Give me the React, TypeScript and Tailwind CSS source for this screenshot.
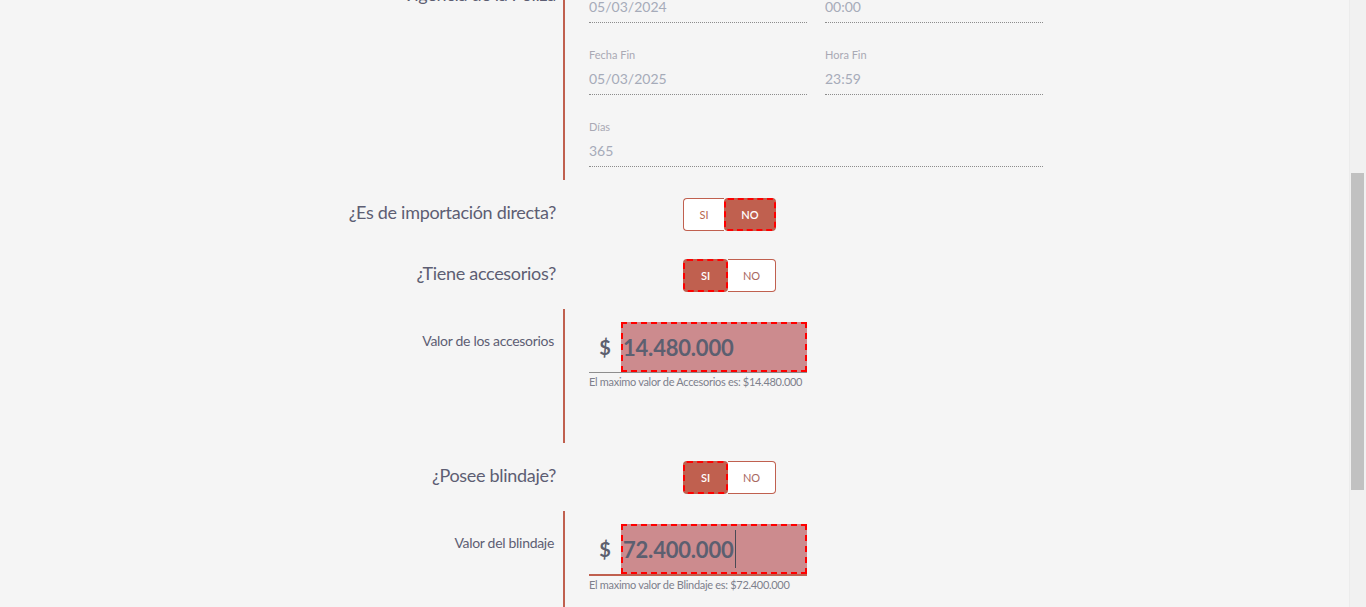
import React, { useLayoutEffect, useRef } from "react";

const ACCENT = "#c0604f";

function Field({ label, value, span }: { label: string; value: string; span?: boolean }) {
  return (
    <div className={span ? "col-span-2" : ""}>
      <div className="text-[11px] leading-[16px] text-[#a9a9b4]">{label}</div>
      <div className="h-[32px] flex items-center text-[14px] text-[#a6abb9] border-b border-dotted border-[#8c8c8c]">
        {value}
      </div>
    </div>
  );
}

function Toggle({ value }: { value: "SI" | "NO" }) {
  const siSel = value === "SI";
  return (
    <div className="flex h-[33px] w-[93px] text-[11px] leading-none">
      <div
        className={
          siSel
            ? "w-[45px] flex items-center justify-center bg-[#c0604f] text-white font-semibold border-2 border-dashed border-[#ff0000] rounded-[4px]"
            : "w-[41px] flex items-center justify-center bg-white text-[#b8664f] border border-r-0 border-[#c0604f] rounded-l-[4px]"
        }
      >
        SI
      </div>
      <div
        className={
          !siSel
            ? "w-[52px] flex items-center justify-center bg-[#c0604f] text-white font-semibold border-2 border-dashed border-[#ff0000] rounded-[4px]"
            : "w-[48px] flex items-center justify-center bg-white text-[#a8685f] border border-l-0 border-[#c0604f] rounded-r-[4px]"
        }
      >
        NO
      </div>
    </div>
  );
}

function ToggleRow({ label, value, className }: { label: string; value: "SI" | "NO"; className?: string }) {
  return (
    <div className={"flex " + (className || "")}>
      <div className="w-[300px] text-right text-[18px] leading-[24px] pt-[2px] tracking-[-0.3px] text-[#5d5e73]">
        {label}
      </div>
      <div className="ml-[7px] border-l-2 border-transparent pl-[24px] flex-1">
        <div className="ml-[94px]">
          <Toggle value={value} />
        </div>
      </div>
    </div>
  );
}

function MoneySection({
  label,
  value,
  helper,
  focused,
  className,
}: {
  label: string;
  value: string;
  helper: string;
  focused?: boolean;
  className?: string;
}) {
  return (
    <div className={"flex h-[134px] " + (className || "")}>
      <div className="w-[300px] text-right pr-[2px] pt-[22px] text-[14px] leading-[20px] tracking-[-0.3px] text-[#5d5e73]">
        {label}
      </div>
      <div className="ml-[7px] border-l-2 border-[#c0604f] pl-[24px] pt-[13px] flex-1">
        <div
          className={
            "w-[218px] flex items-end " +
            (focused ? "border-b-2 border-[#c0604f]" : "border-b border-[#8e8e8e]")
          }
        >
          <div className="w-[32px] h-[50px] flex items-center justify-center text-[20px] font-bold text-[#5d5f6e]">
            $
          </div>
          <div className="w-[186px] h-[50px] flex items-center bg-[#cc8b8e] border-2 border-dashed border-[#ff0000] text-[22px] font-bold tracking-[-0.2px] text-[#5c5f70]">
            <span>{value}</span>
            {focused && <span className="w-px h-[38px] bg-[#4a4a55] ml-[1px]" />}
          </div>
        </div>
        <div className="mt-[1px] text-[11px] leading-[16px] tracking-[-0.3px] text-[#7d808c]">{helper}</div>
      </div>
    </div>
  );
}

export default function App() {
  const scrollRef = useRef<HTMLDivElement>(null);
  const targetRef = useRef<HTMLDivElement>(null);

  useLayoutEffect(() => {
    const c = scrollRef.current;
    const t = targetRef.current;
    if (c && t) c.scrollTop = t.offsetTop + 33;
  }, []);

  return (
    <div className="flex h-[607px] bg-[#f5f5f5]" style={{ fontFamily: "Lato, 'Open Sans', sans-serif" }}>
      <div ref={scrollRef} className="relative flex-1 h-full overflow-hidden">
        <div className="w-[837px] mx-auto pb-[120px]">
          {/* Content above the visible area */}
          <div className="pt-[40px] pb-[20px] text-center text-[22px] text-[#5d5e73]">Datos del vehículo</div>
          <ToggleRow label="¿El vehículo es 0 km?" value="NO" className="mt-[18px]" />
          <ToggleRow label="¿Es de servicio particular?" value="SI" className="mt-[28px]" />
          <ToggleRow label="¿Tiene prenda?" value="NO" className="mt-[28px] mb-[40px]" />

          {/* Vigencia */}
          <div ref={targetRef} className="flex">
            <div className="w-[300px] text-right pt-[16px] text-[18px] leading-[22px] tracking-[-0.3px] text-[#5d5e73]">
              Vigencia de la Póliza
            </div>
            <div className="ml-[7px] border-l-2 border-[#c0604f] pl-[24px] pt-[8px] pb-[13px] flex-1">
              <div className="grid grid-cols-[218px_218px] gap-x-[18px] gap-y-[24px]">
                <Field label="Fecha Inicio" value="05/03/2024" />
                <Field label="Hora Inicio" value="00:00" />
                <Field label="Fecha Fin" value="05/03/2025" />
                <Field label="Hora Fin" value="23:59" />
                <Field label="Días" value="365" span />
              </div>
            </div>
          </div>

          <ToggleRow label="¿Es de importación directa?" value="NO" className="mt-[18px]" />
          <ToggleRow label="¿Tiene accesorios?" value="SI" className="mt-[28px]" />
          <MoneySection
            className="mt-[17px]"
            label="Valor de los accesorios"
            value="14.480.000"
            helper="El maximo valor de Accesorios es: $14.480.000"
          />
          <ToggleRow label="¿Posee blindaje?" value="SI" className="mt-[18px]" />
          <MoneySection
            className="mt-[17px]"
            label="Valor del blindaje"
            value="72.400.000"
            helper="El maximo valor de Blindaje es: $72.400.000"
            focused
          />
          <div className="mt-[30px] flex justify-center">
            <button
              className="px-[40px] h-[40px] rounded-[4px] text-white text-[14px]"
              style={{ backgroundColor: ACCENT }}
            >
              Continuar
            </button>
          </div>
        </div>
      </div>
      {/* scrollbar */}
      <div className="w-[17px] h-full bg-[#f1f1f1] border-l border-[#ececec] pt-[173px] pl-[1px]">
        <div className="w-[13px] h-[317px] bg-[#c1c1c1]" />
      </div>
    </div>
  );
}
